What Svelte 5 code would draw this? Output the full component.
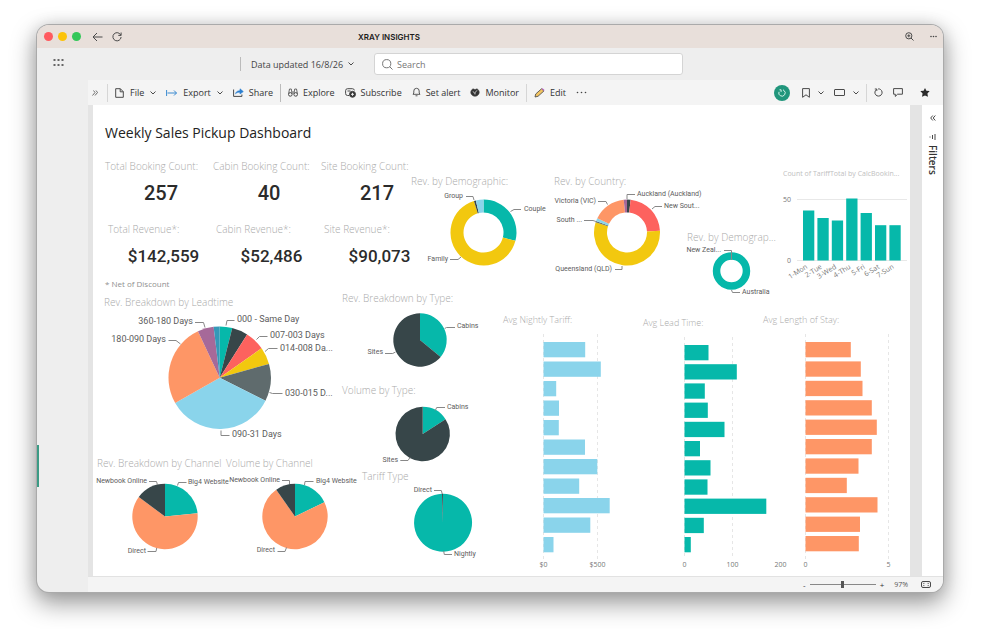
<script>
  const teal = '#06b8aa', dark = '#374649', red = '#fd625e', yellow = '#f2c80f', grey = '#5f6b6d';
  const sky = '#8ad4eb', orange = '#fe9666', purple = '#a66999', blue = '#3599b8';

  // slices: [end angle in degrees, colour]; labels: [text, x, y, anchor, leader points]
  const demographic = {
    w: 139, h: 82, cx: 72.5, cy: 43.5, r: 33, hole: 20,
    slices: [[104.7, teal], [343.2, yellow], [346.5, dark], [360, sky]],
    labels: [
      ['Group', 52, 9, 'end', '55,7.5 62,7.5 63,11'],
      ['Couple', 113, 22, 'start', '99.5,22.5 103,20.5 110,20.5'],
      ['Family', 37, 72, 'end', '39,70.5 47,70.5 50,68']
    ]
  };
  const country = {
    w: 137, h: 84, cx: 77, cy: 43.5, r: 33, hole: 20,
    slices: [[6.3, dark], [87.1, red], [288, yellow], [290.5, grey], [295.8, sky], [354.3, orange], [360, purple]],
    labels: [
      ['Auckland (Auckland)', 87, 7, 'start', '77,10 77,5.5 85,5.5'],
      ['New Sout...', 114, 19, 'start', '102,20 105,17.5 112,17.5'],
      ['Victoria (VIC)', 46, 14, 'end', '48,12.5 56,12.5 57.5,15.5'],
      ['South ...', 32, 33, 'end', '34,31.5 43,31.5 46,32.5'],
      ['Queensland (QLD)', 62, 82, 'end', '65,80.5 72,80.5 72,77']
    ]
  };
  const region = {
    w: 90, h: 46, cx: 44.5, cy: 26, r: 18.7, hole: 11.2,
    slices: [[360, teal]],
    labels: [
      ['New Zeal...', 34, 7, 'end', '37,5.5 44.5,5.5 44.5,15'],
      ['Australia', 55, 49, 'start', '44.5,45 45.5,47.5 53,47.5']
    ]
  };
  const leadtime = {
    w: 249, h: 130, cx: 126.7, cy: 67.7, r: 51.2, size: 9,
    slices: [[14.2, teal], [32.4, dark], [54.9, red], [74.4, yellow], [116.6, grey], [240.4, sky], [334.9, orange], [353.2, purple], [360, blue]],
    labels: [
      ['000 - Same Day', 144, 12, 'start', '133,15.5 134,10.5 141.5,10.5'],
      ['007-003 Days', 177, 28, 'start', '163.5,29.5 166.5,26.5 174.5,26.5'],
      ['014-008 Da...', 187, 41, 'start', '172,41.5 175.5,38.5 184.5,38.5'],
      ['030-015 D...', 192, 86, 'start', '176.5,82.5 179.5,83.5 189.5,83.5'],
      ['090-31 Days', 139, 127, 'start', '128,120.5 128,125.5 136.5,125.5'],
      ['180-090 Days', 73, 32, 'end', '75.5,30.5 83,30.5 87.5,34'],
      ['360-180 Days', 100, 14, 'end', '102,12.5 110.5,12.5 112,17.5']
    ]
  };
  const revChannel = {
    w: 129, h: 88, cx: 72, cy: 45.5, r: 32.7,
    slices: [[84.1, teal], [306.6, orange], [360, dark]],
    labels: [
      ['Newbook Online', 54, 12, 'end', '56,10.5 63.5,10.5 64.5,14'],
      ['Big4 Website', 95, 13, 'start', '84.5,14.5 85.5,11.5 93.5,11.5'],
      ['Direct', 53, 82, 'end', '54.5,80.5 63,80.5 63.7,77']
    ]
  };
  const volChannel = {
    w: 120, h: 88, cx: 73, cy: 45.5, r: 32.7,
    slices: [[64, teal], [325, orange], [360, dark]],
    labels: [
      ['Newbook Online', 58, 11, 'end', '60,9.5 67.5,9.5 67.5,13'],
      ['Big4 Website', 94, 12, 'start', '82.5,14 83,10.5 91.5,10.5'],
      ['Direct', 53, 81, 'end', '55.5,80.5 63,80.5 64.5,76.5']
    ]
  };
  const revType = {
    w: 155, h: 63, cx: 78, cy: 34, r: 26.7,
    slices: [[129.4, teal], [360, dark]],
    labels: [
      ['Cabins', 115, 22, 'start', '102.7,22.5 104.5,21.5 113,21.5'],
      ['Sites', 41, 48, 'end', '43,47.5 50.7,47.5 53.5,46']
    ]
  };
  const volType = {
    w: 155, h: 70, cx: 80.7, cy: 36, r: 27.2,
    slices: [[57, teal], [360, dark]],
    labels: [
      ['Cabins', 105, 11, 'start', '93.3,12.5 94.7,9.5 103,9.5'],
      ['Sites', 56, 64, 'end', '58.3,62.5 66,62.5 68,59.5']
    ]
  };
  const tariffType = {
    w: 155, h: 77, cx: 101, cy: 38.7, r: 29,
    slices: [[358, teal], [360, dark]],
    labels: [
      ['Direct', 90, 8, 'end', '92,6.5 99.3,6.5 100.3,10'],
      ['Nightly', 112, 72, 'start', '101.7,67 102.3,70.5 110,70.5']
    ]
  };

  const nightly = {
    w: 140, h: 238, x0: 46.5, y0: 8, pitch: 19.5, color: sky,
    bars: [41.7, 57.3, 12.7, 15.5, 15.3, 41.5, 53.8, 35.7, 66.2, 46.8, 10],
    ticks: [['$0', 46.5], ['$500', 100.5]]
  };
  const lead = {
    w: 123, h: 235, x0: 47.5, y0: 8, pitch: 19.2, color: teal,
    bars: [24, 52.3, 20.3, 23.3, 40, 15.5, 26, 23, 81.8, 19.3, 6.3],
    ticks: [['0', 47.5], ['100', 95.5], ['200', 143.5]]
  };
  const stay = {
    w: 150, h: 238, x0: 45.5, y0: 8, pitch: 19.4, color: orange,
    bars: [45.3, 55.3, 57, 66.3, 71.3, 66.3, 53, 41.3, 72, 54.5, 53.3],
    ticks: [['0', 45.5], ['5', 128.5]]
  };
  const days = [['1-Mon', 50], ['2-Tue', 42.5], ['3-Wed', 40], ['4-Thu', 62], ['5-Fri', 47.5], ['6-Sat', 35.3], ['7-Sun', 35.3]];

  const kpis = [
    { label: 'Total Booking Count:', value: '257' },
    { label: 'Cabin Booking Count:', value: '40' },
    { label: 'Site Booking Count:', value: '217' },
    { label: 'Total Revenue*:', value: '$142,559', money: true },
    { label: 'Cabin Revenue*:', value: '$52,486', money: true },
    { label: 'Site Revenue*:', value: '$90,073', money: true }
  ];

  let query = $state('');
  let zoom = $state(97);

  function point(c, radius, deg) {
    const a = (deg - 90) * Math.PI / 180;
    return `${(c.cx + radius * Math.cos(a)).toFixed(2)} ${(c.cy + radius * Math.sin(a)).toFixed(2)}`;
  }
  function slicePath(c, i) {
    const start = i ? c.slices[i - 1][0] : 0;
    const end = c.slices[i][0];
    const large = end - start > 180 ? 1 : 0;
    const outer = `M${point(c, c.r, start)}A${c.r} ${c.r} 0 ${large} 1 ${point(c, c.r, end)}`;
    return c.hole
      ? `${outer}L${point(c, c.hole, end)}A${c.hole} ${c.hole} 0 ${large} 0 ${point(c, c.hole, start)}Z`
      : `${outer}L${c.cx} ${c.cy}Z`;
  }
</script>

{#snippet pie(title, c, cls = '')}
  <figure class={cls}>
    <figcaption>{title}</figcaption>
    <svg class="chart" viewBox="0 0 {c.w} {c.h}">
      {#if c.slices.length === 1}
        <circle cx={c.cx} cy={c.cy} r={(c.r + c.hole) / 2} fill="none" stroke={c.slices[0][1]} stroke-width={c.r - c.hole} />
      {:else}
        {#each c.slices as s, i}<path d={slicePath(c, i)} fill={s[1]} />{/each}
      {/if}
      {#each c.labels as l}
        <polyline points={l[4]} />
        <text x={l[1]} y={l[2]} text-anchor={l[3]} font-size={c.size ?? 7}>{l[0]}</text>
      {/each}
    </svg>
  </figure>
{/snippet}

{#snippet bars(title, c, cls = '')}
  <figure class="bars {cls}">
    <figcaption>{title}</figcaption>
    <svg class="chart" viewBox="0 0 {c.w} {c.h}">
      {#each c.ticks as t}
        {#if t[1] < c.w}<line class="dash" x1={t[1]} x2={t[1]} y1="0" y2={c.h - 13} />{/if}
        <text class="tick" x={t[1]} y={c.h - 5} text-anchor="middle">{t[0]}</text>
      {/each}
      {#each c.bars as b, i}<rect x={c.x0} y={c.y0 + i * c.pitch} width={b} height="15.3" fill={c.color} />{/each}
    </svg>
  </figure>
{/snippet}

{#snippet chevron()}
  <svg class="ico" width="6" height="4" viewBox="0 0 6 4"><path d="M.5.5 3 3 5.5.5" /></svg>
{/snippet}

<main class="window">
  <div class="titlebar">
    <div class="lead">
      <i class="light r"></i><i class="light y"></i><i class="light g"></i>
      <button aria-label="Back" class="back"><svg class="ico" width="11" height="10" viewBox="0 0 11 10"><path d="M10.500 5H1M5 1 1 5l4 4" /></svg></button>
      <button aria-label="Reload"><svg class="ico" width="10" height="10" viewBox="0 0 10 10"><path d="M8.800 3.200A4.100 4.100 0 1 0 9.100 5M9.100 .5v2.900H6.300" /></svg></button>
    </div>
    <strong>XRAY INSIGHTS</strong>
    <div class="tail">
      <button aria-label="Zoom in"><svg class="ico" width="9" height="9" viewBox="0 0 9 9"><circle cx="3.800" cy="3.800" r="3.100" /><path d="m6 6 2.500 2.500M3.800 2.300v3M2.300 3.800h3" /></svg></button>
      <button aria-label="More"><svg width="7" height="3" viewBox="0 0 7 3" fill="#444"><circle cx="1" cy="1.500" r=".8" /><circle cx="3.500" cy="1.500" r=".8" /><circle cx="6" cy="1.500" r=".8" /></svg></button>
    </div>
  </div>

  <div class="app">
    <nav class="rail">
      <button aria-label="App launcher"><svg width="11" height="7" viewBox="0 0 11 7" fill="#666">
        {#each [0, 4, 8] as x}{#each [0, 5] as y}<rect x={x + .5} {y} width="2" height="2" />{/each}{/each}
      </svg></button>
      <i class="marker"></i>
    </nav>

    <div class="content">
      <header>
        <button class="updated">Data updated 16/8/26 {@render chevron()}</button>
        <label class="search">
          <svg class="ico" width="11" height="11" viewBox="0 0 11 11"><circle cx="4.700" cy="4.700" r="4.100" /><path d="m7.700 7.700 2.800 2.800" /></svg>
          <input type="search" placeholder="Search" aria-label="Search" bind:value={query} />
        </label>
      </header>

      <div class="toolbar">
        <button class="expand" aria-label="Expand"><svg class="ico" width="6" height="6" viewBox="0 0 6 6"><path d="M1.500.500 3 2.500.5 5.500M4 .500l1.500 2L3 5.500" stroke-width=".8" /></svg></button>
        <i class="sep"></i>
        <button class="menu"><svg class="ico" width="9" height="10" viewBox="0 0 9 10"><path d="M.7.7h4.600l3 3v5.600H.7zM5.200.7v3.100h3.100" /></svg>File {@render chevron()}</button>
        <button class="menu"><svg class="ico" width="11" height="8" viewBox="0 0 11 8" style:stroke="#3b8ad0"><path d="M.6 1v6M1.500 4h9M8 1.500 10.500 4 8 6.500" /></svg>Export {@render chevron()}</button>
        <button class="share"><svg class="ico" width="11" height="9" viewBox="0 0 11 9"><path d="M.6 1.500v6.900h8.300V6.500" /><path d="M2.500 5.800C3 3.500 4.600 2.700 7 2.700V.8L10.300 3.600 7 6V4.300c-2 0-3.500.3-4.500 1.500z" fill="#2b7fd0" style:stroke="#2b7fd0" stroke-width=".6" /></svg>Share</button>
        <i class="sep dark"></i>
        <button><svg class="ico" width="10" height="9" viewBox="0 0 10 9"><circle cx="2.300" cy="6.400" r="1.800" /><circle cx="7.700" cy="6.400" r="1.800" /><path d="M.6 5.600 1.500 1h1.800L4.100 6M9.400 5.600 8.500 1H6.700L5.900 6M4.100 4h1.800" stroke-width=".8" /></svg>Explore</button>
        <button><svg class="ico" width="11" height="10" viewBox="0 0 11 10"><path d="M4 7.500H2.600a2 2 0 0 1-2-2V2.700a2 2 0 0 1 2-2h4.800a2 2 0 0 1 2 1.700M2.500 3h3" /><circle cx="7.500" cy="6.300" r="3" fill="#333" /><path d="M7.500 4.800v3M6 6.300h3" style:stroke="#eee" /></svg>Subscribe</button>
        <button><svg class="ico" width="9" height="9" viewBox="0 0 9 9"><path d="M1 6.300h7L7.200 5V3A2.700 2.700 0 0 0 1.800 3v2zM3.500 7.800h2" stroke-width=".9" /></svg>Set alert</button>
        <button><svg class="ico" width="10" height="9" viewBox="0 0 10 9"><path d="M1.500 2 3 .800l2 .8 2-.8L8.500 2l.8 2A4.300 4.300 0 0 1 5 8.300 4.300 4.300 0 0 1 .700 4z" fill="#333" stroke-width=".6" /><path d="M3 3.300l1.500 2 2.500-3M5 5v1.500" style:stroke="#ddd" stroke-width=".8" /></svg>Monitor</button>
        <i class="sep"></i>
        <button class="edit"><svg width="11" height="10" viewBox="0 0 11 10"><path d="m1 9 .7-3L7.500.8 9.900 3 4 8.300z" fill="#f2c462" stroke="#444" stroke-width=".8" /><path d="m7.500.8 1-.5 2 1.700-.6 1z" fill="#b45fc0" /></svg>Edit</button>
        <button aria-label="More options" class="more"><svg width="11" height="3" viewBox="0 0 11 3" fill="#444"><circle cx="1.500" cy="1.500" r=".8" /><circle cx="5.500" cy="1.500" r=".8" /><circle cx="9.500" cy="1.500" r=".8" /></svg></button>

        <div class="actions">
          <button class="round" aria-label="Copilot"><svg class="ico" width="8" height="8" viewBox="0 0 8 8" style:stroke="#d5f3ea"><path d="M1.500.8h1.600v2.100M1 2.800A3.200 3.200 0 1 0 6 1.500L5 .8" /></svg></button>
          <button class="drop" aria-label="Bookmarks"><svg class="ico" width="8" height="10" viewBox="0 0 8 10"><path d="M.6.6h6.800v8.700L4 6.800.6 9.300z" /></svg>{@render chevron()}</button>
          <button class="drop" aria-label="View"><svg class="ico" width="11" height="7" viewBox="0 0 11 7"><rect x=".5" y=".5" width="10" height="6" rx=".5" /></svg>{@render chevron()}</button>
          <i class="sep"></i>
          <button aria-label="Refresh"><svg class="ico" width="9" height="9" viewBox="0 0 9 9"><path d="M6.500 1.500a3.600 3.600 0 1 1-4 0M.800 1h2v2M6.500 1.500C5.500.8 4.500.8 4 1" /></svg></button>
          <button class="comment" aria-label="Comment"><svg class="ico" width="10" height="9" viewBox="0 0 10 9"><path d="M.6.600h8.800v5.600H4.600L2.300 8.400V6.200H.6z" /></svg></button>
          <button class="star" aria-label="Favourite"><svg width="10" height="9" viewBox="0 0 10 9"><path d="m5 0 1.400 2.700 3.300.3-2.300 2.400.6 3.400L5 7.400 2 8.800l.6-3.400L.3 3l3.300-.3z" fill="#2b2b2b" /></svg></button>
        </div>
      </div>

      <div class="stage">
        <article class="report">
          <div class="top">
            <section class="summary">
              <h1>Weekly Sales Pickup Dashboard</h1>
              <dl>
                {#each kpis as k}
                  <div class:money={k.money}><dt>{k.label}</dt><dd>{k.value}</dd></div>
                {/each}
              </dl>
              <p>* Net of Discount</p>
            </section>
            {@render pie('Rev. by Demographic:', demographic, 'donut')}
            {@render pie('Rev. by Country:', country, 'donut country')}
            {@render pie('Rev. by Demograp...', region, 'small')}
            <figure class="daily">
              <figcaption>Count of TariffTotal by CalcBookin...</figcaption>
              <svg class="chart" viewBox="0 0 133 102">
                <line class="grid" x1="20" x2="130" y1="17.500" y2="17.500" />
                <line class="grid" x1="20" x2="130" y1="78.500" y2="78.500" />
                <text class="tick" x="14" y="20" text-anchor="end">50</text>
                <text class="tick" x="14" y="81" text-anchor="end">0</text>
                {#each days as d, i}
                  <rect x={26 + i * 14.4} y={78.5 - d[1]} width="11.300" height={d[1]} fill={teal} />
                  <text class="tick" text-anchor="end" transform="translate({31 + i * 14.4} 86) rotate(-32)">{d[0]}</text>
                {/each}
              </svg>
            </figure>
          </div>

          <div class="bottom">
            <div class="col">
              {@render pie('Rev. Breakdown by Leadtime', leadtime, 'leadtime')}
              <div class="pair">
                {@render pie('Rev. Breakdown by Channel', revChannel)}
                {@render pie('Volume by Channel', volChannel)}
              </div>
            </div>
            <div class="col types">
              {@render pie('Rev. Breakdown by Type:', revType)}
              {@render pie('Volume by Type:', volType)}
              {@render pie('Tariff Type', tariffType, 'tariff')}
            </div>
            {@render bars('Avg Nightly Tariff:', nightly)}
            {@render bars('Avg Lead Time:', lead, 'low')}
            {@render bars('Avg Length of Stay:', stay, 'stay')}
          </div>
        </article>

        <aside class="filters">
          <button aria-label="Expand filters"><svg class="ico" width="6" height="6" viewBox="0 0 6 6"><path d="M2.800.5 .7 3l2.100 2.500M5.300.5 3.200 3l2.100 2.500" /></svg></button>
          <svg class="ico" width="7" height="6" viewBox="0 0 7 6"><path d="M6 0v6M3.500 1v4M1 2.500v1" /></svg>
          <span>Filters</span>
        </aside>
      </div>

      <footer>
        <button aria-label="Zoom out">-</button>
        <input type="range" min="10" max="187" aria-label="Zoom level" bind:value={zoom} />
        <button aria-label="Zoom in">+</button>
        <output>{zoom}%</output>
        <button aria-label="Fit to page" class="fit"><svg class="ico" width="10" height="7" viewBox="0 0 10 7"><rect x=".5" y=".5" width="9" height="6" rx="1.500" /><path d="M2.500 3V2.300h1M7.500 3V2.300h-1M2.500 4v.7h1M7.500 4v.7h-1" stroke-width=".7" /></svg></button>
      </footer>
    </div>
  </div>
</main>

<style>
  :global(body) { background: #fff; font-family: "Open Sans", "Noto Sans", sans-serif; color: #333; }
  .window {
    margin: 25px 60px 37px 37px;
    border-radius: 12px;
    overflow: hidden;
    background: #eee;
    box-shadow: 0 0 0 1px #aaa, 0 10px 24px 2px rgb(0 0 0 / 38%), 0 0 16px rgb(0 0 0 / 12%);
  }
  button { border: 0; padding: 0; background: none; font: inherit; color: inherit; display: flex; align-items: center; }
  svg { display: block; flex: none; }
  .ico { fill: none; stroke: #4a4a4a; stroke-width: 1; overflow: visible; }

  .titlebar { display: flex; align-items: center; height: 23px; background: #e8dfda; }
  .titlebar .lead { display: flex; align-items: center; gap: 5px; width: 314px; padding-left: 7px; }
  .light { width: 9px; height: 9px; border-radius: 50%; }
  .r { background: #ff5a5f; }
  .y { background: #fcc30a; }
  .g { background: #34c759; }
  .back { margin: 0 4px 0 6px; }
  .titlebar strong { font: 600 8px/12px Inter, sans-serif; color: #1c1c1c; }
  .tail { margin-left: auto; display: flex; align-items: center; gap: 16px; padding-right: 6px; }

  .app { display: flex; }
  .rail { width: 51px; flex: none; display: flex; flex-direction: column; padding: 11px 0 105px; box-sizing: border-box; }
  .rail button { margin-left: 16px; }
  .marker { width: 2px; height: 42px; margin-top: auto; background: #3c9b85; }
  .content { flex: 1; min-width: 0; }

  header { display: flex; align-items: center; height: 32px; padding-left: 152px; font-size: 9px; }
  .updated { gap: 5px; padding-left: 10px; height: 14px; border-left: 1px solid #bbb; white-space: nowrap; color: #444; }
  .search {
    display: flex; align-items: center; gap: 4px; flex: 0 1 309px; height: 22px; margin-left: 20px;
    padding-left: 7px; box-sizing: border-box; background: #fff; border: 1px solid #d4d4d4; border-radius: 3px;
  }
  .search input { flex: 1; min-width: 0; border: 0; outline: 0; padding: 0; background: none; font: inherit; color: #333; }
  .search input::placeholder { color: #777; opacity: 1; }
  .search .ico { stroke: #777; }

  .toolbar { display: flex; align-items: center; gap: 10px; height: 25px; padding-left: 4px; background: #f4f4f4; font-size: 9px; white-space: nowrap; }
  .toolbar button { gap: 5px; }
  .toolbar .sep { width: 1px; height: 18px; background: #d6d6d6; margin: 0 -3px; }
  .toolbar .sep.dark { background: #bbb; }
  .toolbar .menu { gap: 6px; }
  .actions { display: flex; align-items: center; gap: 10px; margin-left: auto; padding-right: 13px; }
  .toolbar .round { width: 16px; height: 16px; border-radius: 50%; justify-content: center; background: #21967c; margin-right: 2px; }
  .toolbar .drop { gap: 8px; }
  .star { margin-left: 7px; }

  .toolbar .expand { margin-right: 2px; }

  .stage { display: flex; background: #e4e4e4; padding-left: 5px; gap: 12px; }
  .report { flex: 1; min-width: 0; background: #fff; padding-bottom: 4px; }
  .filters { width: 21px; flex: none; background: #fff; display: flex; flex-direction: column; align-items: center; padding-top: 10px; box-sizing: border-box; }
  .filters button { margin-bottom: 13px; }
  .filters span { writing-mode: vertical-rl; font: 600 10px/12px "Open Sans", sans-serif; margin-top: 5px; }

  .top { display: grid; grid-template-columns: 318fr 139fr 137fr 90fr 133fr; }
  .bottom { display: grid; grid-template-columns: 249fr 155fr 140fr 123fr 150fr; }
  .top > *, .bottom > * { min-width: 0; }
  h1 { margin: 0; font-size: 14px; line-height: 20px; font-weight: 380; color: #222; white-space: nowrap; }
  .summary { padding: 18px 0 0 12px; }
  dl { margin: 17px -18px 0 0; display: grid; grid-template-columns: repeat(3, 1fr); row-gap: 18px; }
  dl .money { padding-left: 3px; }
  dt, figcaption { font-size: 10px; font-weight: 300; line-height: 12px; color: #aaa; white-space: nowrap; }
  dd { margin: 9px 0 0; padding-left: 4px; text-align: center; font: 500 20px/24px Roboto, sans-serif; color: #2b2b2b; }
  .money dd { font-size: 17px; padding-left: 6px; }
  .summary p { margin: 10px 0 0; font-size: 8px; line-height: 12px; color: #909090; }

  figure { margin: 0; min-width: 0; }
  .chart { width: 100%; height: auto; overflow: visible; font-family: Roboto, sans-serif; margin-top: 2px; }
  .chart text { fill: #5c5c5c; }
  .chart .tick { font-family: "Open Sans", sans-serif; font-size: 7px; fill: #777; }
  .chart polyline { fill: none; stroke: #888; stroke-width: 1; }
  .grid { stroke: #e8e8e8; }
  .dash { stroke: #e6e6e6; stroke-dasharray: 3 3; }
  .donut { padding-top: 70px; }
  .country figcaption { padding-left: 4px; }
  .small { padding-top: 126px; }
  .daily { padding-top: 63px; }
  .daily figcaption { font-size: 7px; font-weight: 400; padding-left: 6px; color: #c0c0c0; }

  .col { display: flex; flex-direction: column; }
  .leadtime { padding-top: 5px; margin-bottom: 17px; }
  .leadtime figcaption { padding-left: 11px; }
  .pair { display: grid; grid-template-columns: 129fr 120fr; }
  .pair figcaption { padding-left: 4px; }
  .types { padding-top: 1px; }
  .types figure { margin-bottom: 15px; }
  .types .tariff { margin: -13px 0 0; }
  .types .tariff figcaption { padding-left: 20px; }
  .bars { padding-top: 23px; }
  .bars figcaption { font-size: 9px; padding-left: 6px; }
  .bars .chart { margin-top: 8px; }
  .low { padding-top: 26px; }
  .stay figcaption { padding-left: 3px; }

  footer { display: flex; align-items: center; justify-content: flex-end; gap: 4px; height: 16px; padding-right: 12px; background: #f4f4f4; border-top: 1px solid #e2e2e2; box-sizing: border-box; font-size: 8px; line-height: 12px; }
  footer output { font-size: 7px; margin: 0 9px 0 6px; color: #555; }
  footer input { appearance: none; width: 66px; height: 8px; margin: 0; background: linear-gradient(#888, #888) center / 100% 1px no-repeat; }
  footer input::-webkit-slider-thumb { appearance: none; width: 3px; height: 7px; background: #555; }
</style>
